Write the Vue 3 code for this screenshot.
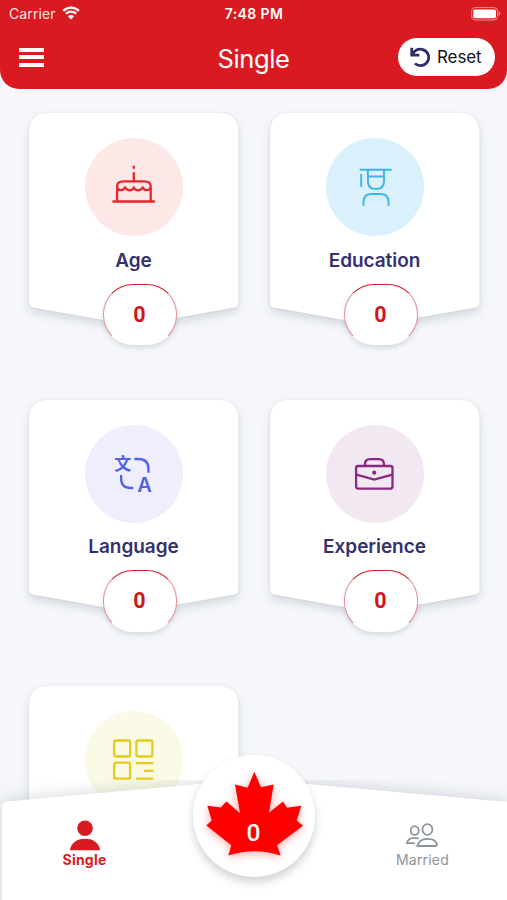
<template>
  <div class="screen">
    <header class="header">
      <div class="status-bar">
        <div class="carrier">
          <span>Carrier</span>
          <svg class="wifi" viewBox="0 0 18 14">
            <path d="M1.2 4.9a11 11 0 0 1 15.6 0M3.9 7.8a7.2 7.2 0 0 1 10.2 0" />
            <path class="wifi-dot" d="M5.9 10.2a4.4 4.4 0 0 1 6.2 0L9 13.4z" />
          </svg>
        </div>
        <span class="clock">7:48 PM</span>
        <div class="battery-wrap">
          <svg class="battery" viewBox="0 0 30 14">
            <rect class="battery-case" x="0.6" y="0.6" width="26" height="12.4" rx="3.6" />
            <rect class="battery-fill" x="2.2" y="2.4" width="22.8" height="8.8" rx="1.8" />
            <path class="battery-tip" d="M27.6 4.6q1.8.6 1.8 2.2t-1.8 2.2z" />
          </svg>
        </div>
      </div>
      <div class="nav-bar">
        <button class="menu-button" aria-label="Menu">
          <span></span>
          <span></span>
          <span></span>
        </button>
        <h1 class="page-title">Single</h1>
        <button class="reset-button">
          <svg class="reset-icon" viewBox="0 0 22 22">
            <path d="M1.8 0.8V8.4H9.8M2.6 7.6C5 3.4 9 2 12.2 2.4a8.6 8.6 0 1 1-7 14.9" />
          </svg>
          <span>Reset</span>
        </button>
      </div>
    </header>

    <main class="card-grid">
      <div v-for="card in cards" :key="card.id" class="card">
        <svg class="card-shape" viewBox="0 0 210 212">
          <path d="M20 0H190Q210 0 210 20V190Q210 194 206 195L105 213L4 195Q0 194 0 190V20Q0 0 20 0Z" />
        </svg>
        <div class="icon-circle" :class="card.id">
          <svg class="icon" viewBox="0.6 0.3 98 98">
            <g v-if="card.id === 'age'">
              <path d="M28 63.8H70.5M32.7 64V50M66.3 64V50M49.4 34.5V43.5M49.4 28V31" />
              <path d="M32.7 48.5C32.7 45 35 43.6 39 43.6H60C64 43.6 66.3 45 66.3 48.5C66.3 53.5 60.5 53.5 58.4 50C56 53.5 51.5 53.5 49.5 50C47.5 53.5 43 53.5 40.6 50C38.5 53.5 32.7 53.5 32.7 48.5Z" />
            </g>
            <g v-else-if="card.id === 'education'" class="thin">
              <path d="M34.3 32H66.2M35.8 36.4V49.2M42.5 32V43.5Q42.5 51.4 50.5 51.4T58.6 43.5V32M42.5 38.8H58.6" />
              <path d="M38.1 68V64Q38.1 56.2 46 56.2H55.2Q63.1 56.2 63.1 64V68" />
            </g>
            <g v-else-if="card.id === 'language'">
              <path d="M50 34.3H54Q64 34.3 64 44V48M36.7 50.3V53.5Q36.7 63.3 46.5 63.3H48.8" />
              <text class="han" x="38.4" y="45">文</text>
              <text class="latin" x="60.2" y="67.4">A</text>
            </g>
            <g v-else-if="card.id === 'experience'">
              <rect x="30.7" y="41.3" width="36.4" height="22.6" rx="2" />
              <path d="M39.6 41V39.5Q39.6 34.5 44.5 34.5H53.5Q58.5 34.5 58.5 39.5V41M31 50L48.9 54.8L67 50" />
              <circle class="clasp" cx="48.8" cy="48" r="2.1" />
            </g>
            <g v-else>
              <rect x="29.8" y="29.8" width="16" height="16" rx="2" />
              <rect x="52" y="29.8" width="16" height="16" rx="2" />
              <rect x="29.8" y="52" width="16" height="16" rx="2" />
              <path d="M51.5 52.5H69M59.5 60.2H69M51.5 68H69" />
            </g>
          </svg>
        </div>
        <h2 class="card-title">{{ card.title }}</h2>
        <div class="score">{{ card.score }}</div>
      </div>
    </main>

    <nav class="tab-bar">
      <svg class="tab-shape" viewBox="0 0 507 120">
        <path d="M2 130V27Q2 22 7 21.5L253 -1L507 22V130Z" />
      </svg>
      <button class="tab active">
        <svg class="single-icon" viewBox="0 0 30 31">
          <circle cx="15" cy="8.2" r="7.8" />
          <path d="M0 30.3C.8 23.4 6.4 18.8 15 18.8S29.2 23.4 30 30.3Z" />
        </svg>
        <span>Single</span>
      </button>
      <div class="total">
        <svg class="leaf" viewBox="75 90 300 260">
          <path d="M223 95L203 143L165 133L180 219L139 184L122 202L82 197L95 241L79 256L154 315L145 346Q223 320 302 346L291 315L369 257L350 241L364 197L321 203L309 184L267 218L281 133L243 141Z" />
        </svg>
        <span class="total-value">{{ total }}</span>
      </div>
      <button class="tab">
        <svg class="married-icon" viewBox="0 0 32 25">
          <ellipse cx="21.4" cy="6.5" rx="5" ry="5.3" />
          <ellipse cx="8.7" cy="7.5" rx="4" ry="4.4" />
          <path d="M11.4 23Q13 15.9 21.4 15.9T31 21.5Q31 23 29.5 23Z" />
          <path d="M8.8 20.2H1Q1.8 14.8 8.5 14.8Q11 14.8 12.6 15.6" />
        </svg>
        <span>Married</span>
      </button>
    </nav>
  </div>
</template>

<script setup>
import { ref, computed } from 'vue';

const cards = ref([
  { id: 'age', title: 'Age', score: 0 },
  { id: 'education', title: 'Education', score: 0 },
  { id: 'language', title: 'Language', score: 0 },
  { id: 'experience', title: 'Experience', score: 0 },
  { id: 'other', title: '', score: 0 },
]);

const total = computed(() => cards.value.reduce((sum, card) => sum + card.score, 0));
</script>

<style>
body {
  margin: 0;
  background: #f5f7fb;
}
</style>

<style scoped>
.screen {
  position: relative;
  width: 507px;
  height: 900px;
  overflow: hidden;
  background: #f5f7fb;
  font-family: Inter, 'Liberation Sans', sans-serif;
}

button {
  border: 0;
  padding: 0;
  background: none;
  font-family: inherit;
}

.header {
  height: 89px;
  border-radius: 0 0 19px 19px;
  background: #d91a20;
  color: #fff;
}

.status-bar {
  display: grid;
  grid-template-columns: 1fr auto 1fr;
  align-items: center;
  height: 27px;
  padding: 0 6px 0 9px;
  font-size: 14px;
}

.carrier {
  display: flex;
  align-items: center;
  gap: 6px;
  color: #ffe3e3;
  letter-spacing: 0.1px;
}

.wifi {
  width: 18px;
  height: 14px;
  margin-top: -2px;
  fill: none;
  stroke: #fff;
  stroke-width: 2.3;
}

.wifi-dot {
  fill: #fff;
  stroke: none;
}

.clock {
  margin-left: -2px;
  font-size: 14px;
  font-weight: 600;
  letter-spacing: 0.4px;
}

.battery-wrap {
  display: flex;
  justify-content: flex-end;
}

.battery {
  width: 30px;
  height: 14px;
}

.battery-case {
  fill: none;
  stroke: #f08a8d;
  stroke-width: 1;
}

.battery-fill {
  fill: #fff;
}

.battery-tip {
  fill: #f08a8d;
}

.nav-bar {
  display: grid;
  grid-template-columns: 1fr auto 1fr;
  align-items: center;
  height: 60px;
  padding: 0 12px 0 19px;
}

.menu-button {
  display: flex;
  flex-direction: column;
  gap: 3.5px;
  width: 25px;
}

.menu-button span {
  height: 4px;
  background: #fff;
}

.page-title {
  margin: 2px 0 0 -7px;
  font-size: 25.5px;
  font-weight: 400;
  letter-spacing: -0.4px;
}

.reset-button {
  display: flex;
  align-items: center;
  justify-self: end;
  gap: 6px;
  width: 97px;
  height: 38px;
  padding-left: 12px;
  border-radius: 19px;
  background: #fff;
  color: #111;
  font-size: 17px;
  letter-spacing: -0.1px;
}

.reset-icon {
  width: 21px;
  height: 21px;
  flex: none;
  fill: none;
  stroke: #302c6c;
  stroke-width: 2.9;
}

.card-grid {
  display: grid;
  grid-template-columns: repeat(2, 210px);
  grid-auto-rows: 233px;
  column-gap: 31px;
  row-gap: 53.5px;
  padding: 24px 0 0 28.5px;
}

.card {
  position: relative;
  display: flex;
  flex-direction: column;
  align-items: center;
  padding-top: 25px;
  box-sizing: border-box;
}

.card-shape {
  position: absolute;
  top: 0;
  left: 0;
  width: 209.5px;
  height: 211.5px;
  overflow: visible;
  fill: #fff;
  filter: drop-shadow(0 5px 5px rgba(50, 60, 80, 0.15)) drop-shadow(0 0 1px rgba(50, 60, 80, 0.1));
}

.icon-circle {
  position: relative;
  width: 98px;
  height: 98px;
  border-radius: 50%;
}

.icon {
  display: block;
  fill: none;
  stroke: currentColor;
  stroke-width: 2.3;
}

.icon .thin {
  stroke-width: 2;
}

.icon text {
  fill: currentColor;
  stroke: none;
  text-anchor: middle;
}

.han {
  font: 700 17px 'Noto Sans CJK SC', sans-serif;
}

.latin {
  font: 600 20px Inter, sans-serif;
}

.clasp {
  fill: currentColor;
  stroke: none;
}

.age {
  background: #fde8e8;
  color: #e6252c;
}

.education {
  background: #daf1fc;
  color: #3fb5e8;
}

.language {
  background: #eeeefd;
  color: #5263e4;
}

.experience {
  background: #f2e8f2;
  color: #8c2782;
}

.other {
  background: #fafae6;
  color: #e5cc19;
}

.card-title {
  position: relative;
  height: 24px;
  margin: 12.5px 0 0;
  color: #35316f;
  font-size: 19px;
  font-weight: 600;
  line-height: 24px;
  letter-spacing: -0.05px;
}

.score {
  position: relative;
  display: flex;
  align-items: center;
  justify-content: center;
  width: 74px;
  height: 61.5px;
  margin: 11px 0 0 12px;
  box-sizing: border-box;
  border: 1px solid #e58f93;
  border-top-color: #cc1f26;
  border-bottom-color: #fff;
  border-radius: 30px;
  background: #fff;
  box-shadow: 0 3px 5px rgba(50, 60, 80, 0.15);
  color: #d0161c;
  font-family: Roboto, Inter, sans-serif;
  font-size: 21.5px;
  font-weight: 700;
}

.tab-bar {
  position: absolute;
  left: 0;
  bottom: 0;
  display: grid;
  grid-template-columns: 169px 169px 169px;
  width: 507px;
  height: 120px;
}

.tab-shape {
  position: absolute;
  top: 0;
  left: 0;
  width: 507px;
  height: 120px;
  overflow: hidden;
  fill: #fff;
}

.tab-shape path {
  filter: drop-shadow(0 -1px 8px rgba(40, 45, 60, 0.18));
}

.tab {
  position: relative;
  display: flex;
  flex-direction: column;
  align-items: center;
  padding-top: 40px;
  color: #8d949b;
  font-size: 14px;
  letter-spacing: 0.2px;
}

.tab.active {
  color: #d91a20;
  font-weight: 700;
}

.single-icon {
  width: 30px;
  height: 31px;
  fill: currentColor;
}

.married-icon {
  width: 32px;
  height: 25px;
  margin: 3px 1px 3px 0;
  fill: none;
  stroke: currentColor;
  stroke-width: 1.8;
}

.total {
  position: relative;
  display: flex;
  justify-content: center;
  justify-self: center;
  width: 122px;
  height: 122px;
  margin-top: -25px;
  box-sizing: border-box;
  padding-top: 15px;
  border-radius: 50%;
  background: #fff;
  box-shadow: 0 5px 9px rgba(40, 45, 60, 0.22);
}

.leaf {
  width: 100px;
  height: 87px;
  margin-left: 2px;
  overflow: visible;
  fill: #f00;
  filter: drop-shadow(0 2px 4px rgba(255, 0, 0, 0.35));
}

/* score sits on top of the leaf */
.total-value {
  position: absolute;
  top: 64px;
  left: 0;
  width: 100%;
  color: #fff;
  font-family: Roboto, Inter, sans-serif;
  font-size: 24.5px;
  font-weight: 500;
  line-height: 28px;
  text-align: center;
}
</style>
